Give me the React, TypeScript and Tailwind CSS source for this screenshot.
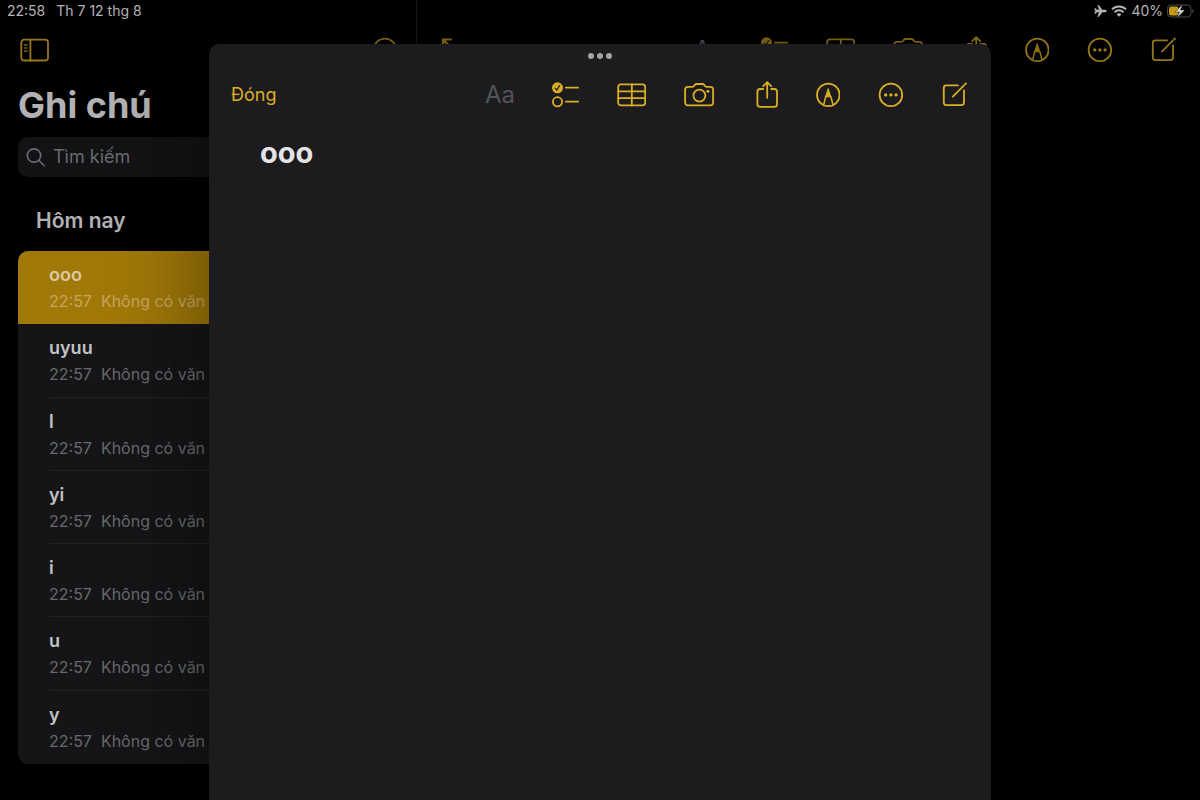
import type { ReactNode } from "react";

const notes = ["ooo", "uyuu", "l", "yi", "i", "u", "y"];

function Icon({ w, children }: { w: number; children: ReactNode }) {
  return (
    <svg
      width={w}
      height={28}
      viewBox={`0 0 ${w} 28`}
      fill="none"
      stroke="currentColor"
      strokeWidth={1.8}
      strokeLinecap="round"
      strokeLinejoin="round"
      aria-hidden="true"
    >
      {children}
    </svg>
  );
}

function ChecklistIcon() {
  return (
    <Icon w={27}>
      <circle cx="5.5" cy="6.8" r="5.5" fill="currentColor" stroke="none" />
      <path d="M3.2 7.2l1.6 1.9 2.9-4.6" stroke="#1c1c1e" strokeWidth="1.3" />
      <circle cx="5.5" cy="20.8" r="4.6" />
      <path d="M13.8 6.7h12.4M13.8 20.7h12.4" />
    </Icon>
  );
}

function TableIcon() {
  return (
    <Icon w={29}>
      <rect x="1.2" y="3.4" width="27" height="21" rx="2.6" />
      <path d="M14.8 3.4v21M1.2 10.4h27M1.2 17.2h27" />
    </Icon>
  );
}

function CameraIcon() {
  return (
    <Icon w={30}>
      <path d="M4 5.9h4.200c.8 0 1.200-.3 1.700-.9l.9-1.100c.5-.6 1-.9 1.800-.9h5.800c.8 0 1.300.3 1.800.9l.9 1.100c.5.6.9.9 1.700.9h3.600c1.900 0 2.700 1 2.700 2.900v12.700c0 1.900-.8 2.900-2.700 2.900H4c-1.900 0-2.900-1-2.900-2.900V8.800c0-1.900 1-2.900 2.900-2.900z" />
      <circle cx="15.400" cy="14.600" r="6" />
      <circle cx="23.900" cy="10.200" r="1.500" fill="currentColor" stroke="none" />
    </Icon>
  );
}

function ShareIcon() {
  return (
    <Icon w={22}>
      <path d="M7.200 8H4c-1.700 0-2.600.9-2.600 2.600v12.700c0 1.700.9 2.600 2.600 2.600h14.400c1.700 0 2.600-.9 2.600-2.600V10.600C21 8.900 20.100 8 18.400 8h-3.200" />
      <path d="M11.200 16.800V1.300M7.200 5.200l4-4 4 4" />
    </Icon>
  );
}

function MarkupIcon() {
  return (
    <Icon w={24}>
      <circle cx="12.300" cy="13.900" r="11.300" />
      <path d="M12.300 8l2.500 7.800h-5z" fill="currentColor" strokeWidth="1" />
      <path d="M9.700 15.800L7.700 23.600M14.900 15.800l2 7.800" strokeWidth="1.500" />
    </Icon>
  );
}

function MoreIcon() {
  return (
    <Icon w={26}>
      <circle cx="12.900" cy="13.900" r="11.300" />
      <g fill="currentColor" stroke="none">
        <circle cx="7.700" cy="13.900" r="1.700" />
        <circle cx="12.900" cy="13.900" r="1.700" />
        <circle cx="18.100" cy="13.900" r="1.700" />
      </g>
    </Icon>
  );
}

function ComposeIcon() {
  return (
    <Icon w={25}>
      <path d="M16 4.400H4.300C2.700 4.400 1.800 5.200 1.800 6.900v14.700c0 1.600.9 2.500 2.500 2.500h15.200c1.600 0 2.500-.9 2.500-2.500V9.500" />
      <path d="M10.800 15.600L22 4.400" />
      <path d="M23.500 2.900l.2-.2" strokeWidth="2.200" />
    </Icon>
  );
}

function SidebarIcon() {
  return (
    <Icon w={32}>
      <rect x="3.300" y="3.700" width="26.700" height="20.800" rx="2.800" />
      <path d="M12.400 3.700v20.800" />
      <path d="M6.400 8.800h2.800M6.400 12h2.800M6.400 15.200h2.800" strokeWidth="1.200" />
    </Icon>
  );
}

function Toolbar() {
  return (
    <div className="flex h-7 items-center gap-[38px]">
      <button aria-label="Định dạng" className="w-[29px] text-2xl leading-7 text-[#545456]">
        Aa
      </button>
      <button aria-label="Danh sách">
        <ChecklistIcon />
      </button>
      <button aria-label="Bảng">
        <TableIcon />
      </button>
      <button aria-label="Máy ảnh">
        <CameraIcon />
      </button>
      <button aria-label="Chia sẻ" className="ml-1">
        <ShareIcon />
      </button>
      <button aria-label="Đánh dấu">
        <MarkupIcon />
      </button>
      <button aria-label="Thêm">
        <MoreIcon />
      </button>
      <button aria-label="Ghi chú mới">
        <ComposeIcon />
      </button>
    </div>
  );
}

function StatusBar() {
  return (
    <div className="absolute inset-x-0 top-0 flex h-[22px] items-center justify-between pr-[6px] pl-[7px] text-sm text-[#b4b4b6]">
      <div className="flex gap-[11px]">
        <span>22:58</span>
        <span>Th 7 12 thg 8</span>
      </div>
      <div className="flex items-center gap-1">
        <svg width="13" height="14" viewBox="0 0 14 14" fill="currentColor" stroke="currentColor" strokeWidth="0.500" aria-hidden="true">
          <path d="M13.500 7c0-.7-.9-1.100-2-1.100H8.800L5.300 1H4l1.700 4.900H3.100L1.700 4.200H.7L1.500 7l-.8 2.800h1l1.400-1.700h2.600L4 13h1.300l3.500-4.900h2.700c1.100 0 2-.4 2-1.100z" />
        </svg>
        <svg width="16" height="12" viewBox="0 0 16 12" fill="none" stroke="currentColor" strokeWidth="2" aria-hidden="true">
          <path d="M1 4.400a10 10 0 0 1 14 0M3.500 7.200a6.400 6.400 0 0 1 9 0" />
          <path d="M8 11.800L5.700 9.400a3.300 3.300 0 0 1 4.600 0z" fill="currentColor" stroke="none" />
        </svg>
        <span>40%</span>
        <svg width="27" height="14" viewBox="0 0 27 14" aria-hidden="true">
          <rect x="0.500" y="1" width="23.500" height="12" rx="3.600" fill="none" stroke="#4a4a4c" />
          <path d="M25.300 5v4c.8-.3 1.300-1.100 1.300-2s-.5-1.700-1.300-2z" fill="#4a4a4c" />
          <rect x="2" y="2.500" width="9.500" height="9" rx="2" fill="#c39a10" />
          <path d="M15.800 0L8 8h4.300L10 14l8-8h-4.400z" fill="#d0d0d2" stroke="#000" strokeWidth="0.400" />
        </svg>
      </div>
    </div>
  );
}

function Sidebar() {
  return (
    <aside className="w-[417px] shrink-0 border-r border-[#1a1a1b] px-[18px] pt-9">
      <div className="flex items-center justify-between">
        <button aria-label="Thanh bên">
          <SidebarIcon />
        </button>
        <button aria-label="Thêm">
          <MoreIcon />
        </button>
      </div>
      <h1 className="mt-[17px] text-4xl leading-12 font-bold text-[#b2b2b4]">Ghi chú</h1>
      <label className="mt-2 flex h-10 items-center gap-2 rounded-[10px] bg-[#131315] px-2 text-[#6a6a6e]">
        <svg width="19" height="20" viewBox="0 0 19 20" fill="none" stroke="currentColor" strokeWidth="1.700" strokeLinecap="round" className="shrink-0" aria-hidden="true">
          <circle cx="8" cy="8.500" r="6.700" />
          <path d="M13 13.500l5 5" />
        </svg>
        <input
          aria-label="Tìm kiếm"
          placeholder="Tìm kiếm"
          className="w-full bg-transparent text-lg outline-none placeholder:text-[#6a6a6e]"
        />
      </label>
      <h2 className="mt-7 pl-[18px] text-[21px] leading-8 font-semibold text-[#b2b2b4]">Hôm nay</h2>
      <ul className="mt-[14px] flex h-[513px] flex-col overflow-hidden rounded-[10px] bg-[#151517]">
        {notes.map((title, i) => (
          <li key={title} className={`flex-1 pl-[31px] ${i === 0 ? "bg-[#a17908] text-[#dcc9a0]" : "text-[#c2c2c4]"}`}>
            <div className={`h-full pt-3 ${i > 0 && i < notes.length - 1 ? "border-b border-[#232325]" : ""}`}>
              <p className="text-lg leading-6 font-semibold">{title}</p>
              <p className={`flex gap-[9px] text-base leading-7 ${i === 0 ? "text-[#c9a660]" : "text-[#69696d]"}`}>
                <span>22:57</span>
                <span>Không có văn bản</span>
              </p>
            </div>
          </li>
        ))}
      </ul>
    </aside>
  );
}

function NoteSheet() {
  return (
    <section
      role="dialog"
      aria-label="ooo"
      className="absolute inset-x-0 top-11 bottom-0 mx-auto w-[782px] rounded-t-[10px] bg-[#1c1c1e] shadow-[0_0_100px_rgba(0,0,0,0.45)]"
    >
      <button aria-label="Đa nhiệm" className="mx-auto flex h-[23px] items-center gap-[3px]">
        <span className="size-[6px] rounded-full bg-[#a4a4a6]" />
        <span className="size-[6px] rounded-full bg-[#a4a4a6]" />
        <span className="size-[6px] rounded-full bg-[#a4a4a6]" />
      </button>
      <header className="mt-[14px] flex items-center justify-between pr-6 pl-[22px] text-[#dcae24]">
        <button className="text-lg leading-7">Đóng</button>
        <Toolbar />
      </header>
      <h2 className="mt-6 pl-[51px] text-[29px] leading-10 font-bold text-[#e4e4e6]">ooo</h2>
    </section>
  );
}

export default function App() {
  return (
    <div className="relative flex h-screen overflow-hidden bg-black font-['Inter','Noto_Sans',sans-serif] text-[#97771a]">
      <StatusBar />
      <Sidebar />
      <main className="flex flex-1 items-start justify-between pt-9 pr-6 pl-6">
        <button aria-label="Mở rộng">
          <Icon w={26}>
            <path d="M2 11V3.500h8M2 3.500l8 8M24 17v7.500h-8M24 24.500l-8-8" strokeWidth="2.200" />
          </Icon>
        </button>
        <Toolbar />
      </main>
      <NoteSheet />
    </div>
  );
}
